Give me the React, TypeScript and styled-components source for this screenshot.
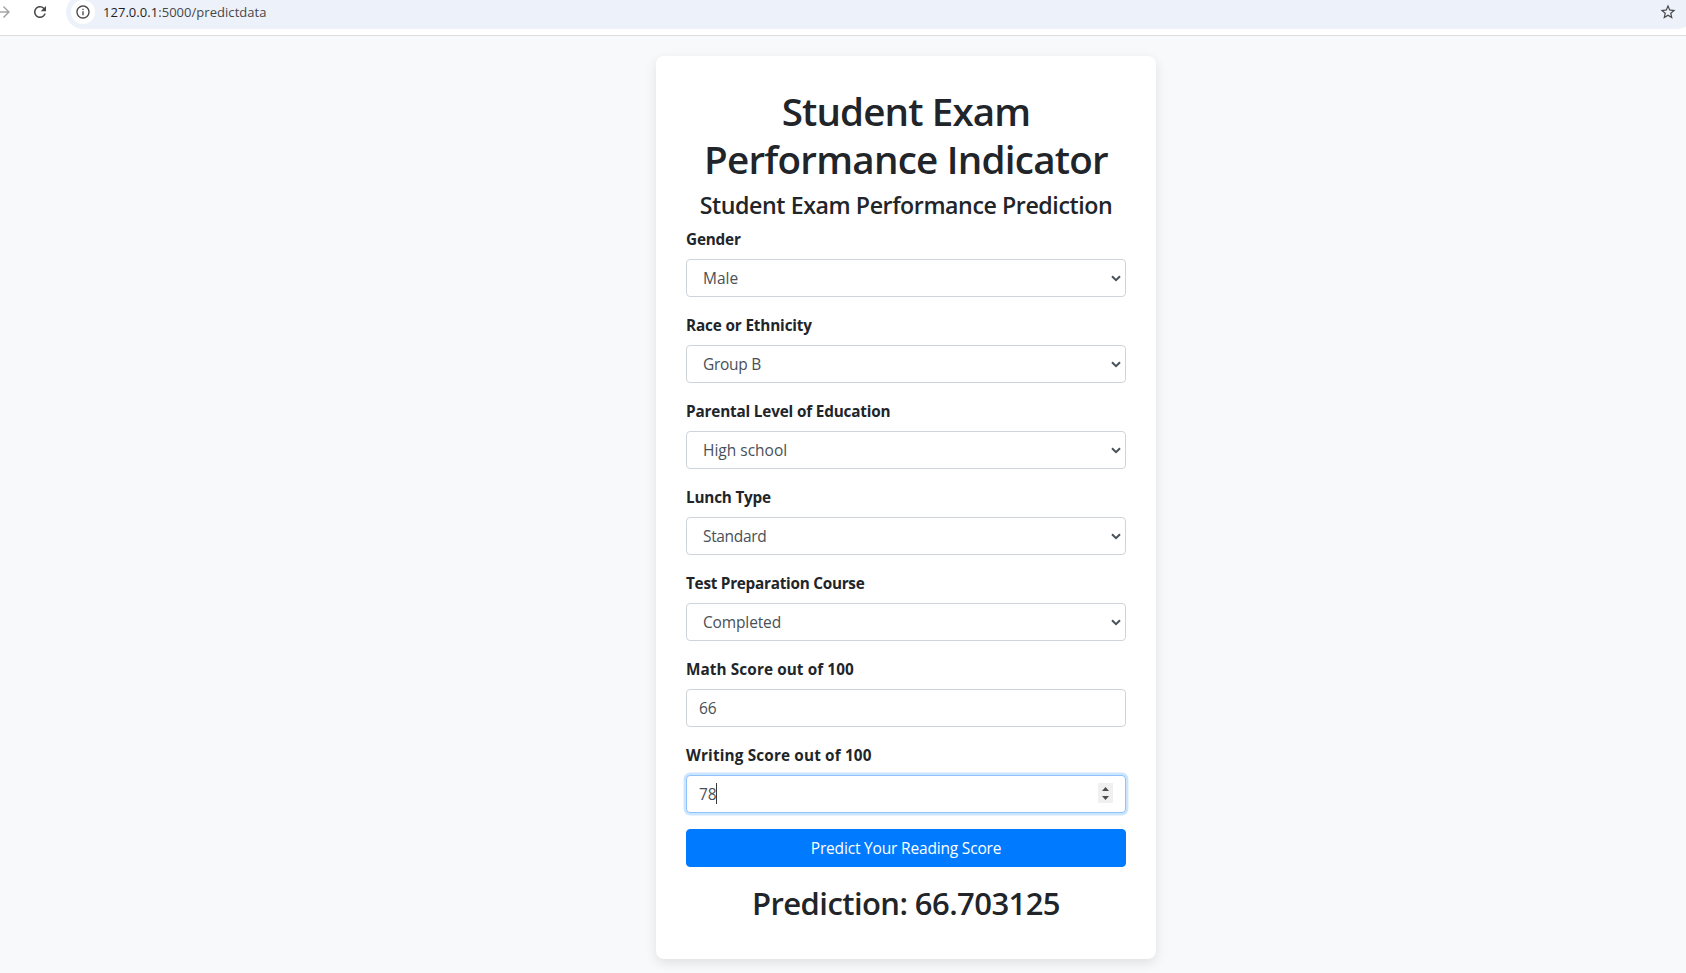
import React from "react";
import styled, { createGlobalStyle } from "styled-components";
import { MdArrowForward, MdInfoOutline, MdRefresh, MdStarBorder } from "react-icons/md";

const GlobalStyle = createGlobalStyle`
  *, *::before, *::after { box-sizing: border-box; }
  html, body { margin: 0; height: 973px; overflow: hidden; }
  body {
    background: #f8f9fa;
    color: #212529;
    font: 400 15.5px/24px "Open Sans", "Noto Sans", sans-serif;
  }
`;

const Toolbar = styled.header`
  display: flex;
  align-items: flex-start;
  height: 36px;
  background: #fff;
  border-bottom: 1px solid #dcdddf;
  overflow: hidden;
`;

const NavIcons = styled.div`
  display: flex;
  align-items: center;
  flex: none;
  gap: 18px;
  width: 71px;
  height: 24px;
  margin-left: -5px;
  color: #474747;

  svg:first-child { color: #a6a6a6; }
`;

const AddressBar = styled.div`
  display: flex;
  align-items: center;
  flex: none;
  width: 1628px;
  height: 34px;
  margin-top: -5px;
  padding: 0 17px 0 5px;
  border-radius: 17px;
  background: #edf1fa;
  color: #474747;
`;

const SiteInfo = styled.span`
  display: flex;
  align-items: center;
  justify-content: center;
  width: 24px;
  height: 24px;
  border-radius: 50%;
  background: #fff;
`;

const Url = styled.span`
  flex: 1;
  margin-left: 8px;
  font-size: 13px;
  line-height: 20px;
  letter-spacing: 0.04px;
  color: #474747;
`;

const Host = styled.span`
  color: #1f1f1f;
`;

const Page = styled.main`
  display: flex;
  justify-content: center;
  align-items: flex-start;
  padding: 20px 0 0 126px;
`;

const Card = styled.section`
  width: 500px;
  height: 903px;
  padding: 30px;
  border-radius: 8px;
  background: #fff;
  box-shadow: 0 4px 12px rgba(0, 0, 0, 0.1);
`;

const Title = styled.h1`
  margin: 0 0 8px;
  padding-top: 1px;
  font-size: 38.6px;
  font-weight: 600;
  line-height: 48px;
  text-align: center;
`;

const Subtitle = styled.h2`
  margin: 0 0 7px;
  font-size: 23.2px;
  font-weight: 600;
  line-height: 28.8px;
  letter-spacing: -0.43px;
  text-align: center;
  white-space: nowrap;
`;

const Result = styled.h2`
  margin: 0;
  font-size: 31px;
  font-weight: 600;
  line-height: 38.4px;
  letter-spacing: -0.57px;
  text-align: center;
`;

const TitleLine = styled.span<{ $tracking: number }>`
  display: block;
  letter-spacing: ${(p) => p.$tracking}px;
`;

const Group = styled.div`
  margin-bottom: 16px;
`;

const Label = styled.label<{ $tracking: number }>`
  display: block;
  width: max-content;
  margin-bottom: 8px;
  font-size: 15.3px;
  font-weight: 700;
  line-height: 24px;
  letter-spacing: ${(p) => p.$tracking}px;
`;

const Control = styled.div`
  position: relative;
`;

const Select = styled.select<{ $tracking: number }>`
  display: block;
  width: 100%;
  height: 38px;
  padding: 6px 30px 6px 16px;
  border: 1px solid #ced4da;
  border-radius: 4px;
  appearance: none;
  background: #fff;
  color: #495057;
  font: inherit;
  letter-spacing: ${(p) => p.$tracking}px;
`;

const Chevron = styled.svg`
  position: absolute;
  right: 5px;
  top: 16px;
  width: 10px;
  height: 7px;
  fill: none;
  stroke: #495057;
  stroke-width: 2;
  pointer-events: none;
`;

const NumberInput = styled.input<{ $active?: boolean }>`
  display: block;
  width: 100%;
  height: 38px;
  padding: 6px 12px;
  border: 1px solid ${(p) => (p.$active ? "#8ec3fb" : "#ced4da")};
  border-radius: 4px;
  outline: 0;
  background: #fff;
  color: #495057;
  font: inherit;
  box-shadow: ${(p) => (p.$active ? "0 0 0 2.4px rgba(0, 123, 255, 0.2)" : "none")};
`;

const Caret = styled.span`
  position: absolute;
  left: 30px;
  top: 8px;
  width: 1px;
  height: 21px;
  background: #343a40;
`;

const Spinner = styled.svg`
  position: absolute;
  right: 13px;
  top: 8px;
  width: 15px;
  height: 20px;
  background: #f0f0f0;
  fill: #4d4d4d;
`;

const Submit = styled.button`
  display: block;
  width: 100%;
  height: 38px;
  margin-bottom: 17px;
  padding: 6px 12px;
  border: 1px solid #007bff;
  border-radius: 4px;
  background: #007bff;
  color: #fff;
  font: inherit;
  letter-spacing: -0.18px;
`;

interface Choice {
  id: string;
  label: string;
  value: string;
  labelTracking: number;
  valueTracking: number;
}

const choices: Choice[] = [
  { id: "gender", label: "Gender", value: "Male", labelTracking: -0.2, valueTracking: 0 },
  { id: "race", label: "Race or Ethnicity", value: "Group B", labelTracking: -0.15, valueTracking: -0.3 },
  { id: "education", label: "Parental Level of Education", value: "High school", labelTracking: -0.17, valueTracking: 0 },
  { id: "lunch", label: "Lunch Type", value: "Standard", labelTracking: -0.2, valueTracking: -0.34 },
  { id: "course", label: "Test Preparation Course", value: "Completed", labelTracking: -0.26, valueTracking: -0.14 },
];

export default function App() {
  return (
    <>
      <GlobalStyle />
      <Toolbar>
        <NavIcons>
          <MdArrowForward size={18} />
          <MdRefresh size={18} />
        </NavIcons>
        <AddressBar>
          <SiteInfo>
            <MdInfoOutline size={16} />
          </SiteInfo>
          <Url>
            <Host>127.0.0.1</Host>:5000/predictdata
          </Url>
          <MdStarBorder size={18} />
        </AddressBar>
      </Toolbar>
      <Page>
        <Card>
          <Title>
            <TitleLine $tracking={-0.87}>Student Exam</TitleLine>
            <TitleLine $tracking={-0.76}>Performance Indicator</TitleLine>
          </Title>
          <Subtitle>Student Exam Performance Prediction</Subtitle>
          {choices.map((choice) => (
            <Group key={choice.id}>
              <Label htmlFor={choice.id} $tracking={choice.labelTracking}>
                {choice.label}
              </Label>
              <Control>
                <Select id={choice.id} $tracking={choice.valueTracking}>
                  <option>{choice.value}</option>
                </Select>
                <Chevron viewBox="0 0 10 7">
                  <path d="M1 1.2 5 5.2 9 1.2" />
                </Chevron>
              </Control>
            </Group>
          ))}
          <Group>
            <Label htmlFor="math" $tracking={0.1}>
              Math Score out of 100
            </Label>
            <NumberInput id="math" defaultValue="66" />
          </Group>
          <Group>
            <Label htmlFor="writing" $tracking={0.16}>
              Writing Score out of 100
            </Label>
            <Control>
              <NumberInput id="writing" $active defaultValue="78" />
              <Caret />
              <Spinner viewBox="0 0 15 20">
                <path d="M4 8 7.5 4 11 8zM4 13 7.5 17 11 13z" />
              </Spinner>
            </Control>
          </Group>
          <Submit>Predict Your Reading Score</Submit>
          <Result>Prediction: 66.703125</Result>
        </Card>
      </Page>
    </>
  );
}
